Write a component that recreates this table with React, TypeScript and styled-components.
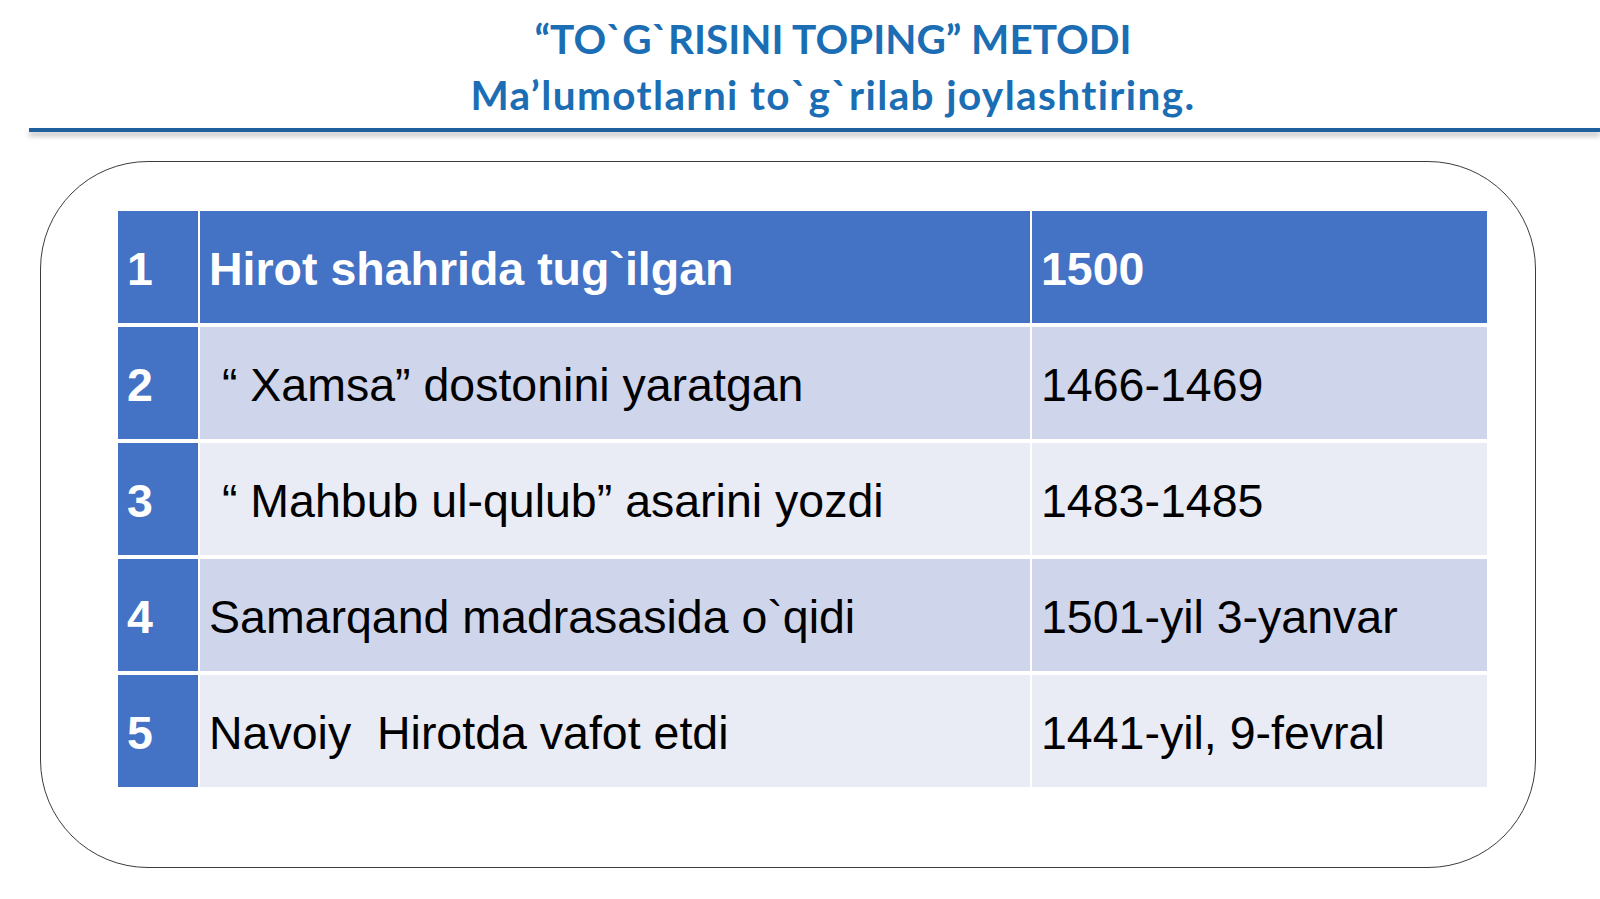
import React from "react";
import styled, { createGlobalStyle } from "styled-components";

const Global = createGlobalStyle`
  html, body { margin: 0; padding: 0; background: #ffffff; }
  body { width: 1600px; height: 899px; overflow: hidden; }
`;

const Page = styled.div`
  width: 1600px;
  height: 899px;
  display: flex;
  flex-direction: column;
  background: #ffffff;
`;

const Title = styled.h1`
  margin: 0;
  padding-top: 11px;
  display: flex;
  flex-direction: column;
  align-items: center;
  padding-left: 66px;
  font-family: Lato, "Open Sans", sans-serif;
  font-weight: 700;
  font-size: 40.5px;
  line-height: 56px;
  color: #1b6db4;
`;

const TitleLine = styled.span<{ $spacing: number }>`
  display: block;
  letter-spacing: ${(p) => p.$spacing}px;
  white-space: pre;
`;

const Rule = styled.div`
  margin-left: 29px;
  margin-top: 5px;
  height: 4px;
  background: #1f609c;
  box-shadow: 0 4px 5px rgba(120, 120, 120, 0.5);
`;

const Frame = styled.div`
  margin-left: 40px;
  margin-top: 29px;
  width: 1496px;
  height: 707px;
  box-sizing: border-box;
  border: 1.5px solid #3c3c3c;
  border-radius: 108px;
  padding: 49px 48px 0 77px;
`;

const Table = styled.div`
  display: grid;
  grid-template-columns: 80px 830px 455px;
  grid-auto-rows: 112px;
  column-gap: 2px;
  row-gap: 4px;
`;

const Cell = styled.div<{ $bg: string; $bold?: boolean; $light?: boolean }>`
  background: ${(p) => p.$bg};
  display: flex;
  align-items: center;
  padding-left: 9px;
  padding-top: 3px;
  font-family: "Liberation Sans", Arial, sans-serif;
  font-size: 46.5px;
  font-weight: ${(p) => (p.$bold ? 700 : 400)};
  color: ${(p) => (p.$light ? "#ffffff" : "#000000")};
  white-space: pre;
`;

const rows = [
  ["1", "Hirot shahrida tug`ilgan", "1500"],
  ["2", " \u201C Xamsa\u201D dostonini yaratgan", "1466-1469"],
  ["3", " \u201C Mahbub ul-qulub\u201D asarini yozdi", "1483-1485"],
  ["4", "Samarqand madrasasida o`qidi", "1501-yil 3-yanvar"],
  ["5", "Navoiy  Hirotda vafot etdi", "1441-yil, 9-fevral"],
];

const BLUE = "#4472c4";
const BAND_DARK = "#cfd5ea";
const BAND_LIGHT = "#e9ebf5";

export default function App() {
  return (
    <Page>
      <Global />
      <Title>
        <TitleLine $spacing={0}>{"\u201CTO`G`RISINI TOPING\u201D METODI"}</TitleLine>
        <TitleLine $spacing={1.4}>{"Ma\u2019lumotlarni to`g`rilab joylashtiring."}</TitleLine>
      </Title>
      <Rule />
      <Frame>
        <Table>
          {rows.map((r, i) => {
            const header = i === 0;
            const bg = header ? BLUE : i % 2 === 1 ? BAND_DARK : BAND_LIGHT;
            return (
              <React.Fragment key={r[0]}>
                <Cell $bg={BLUE} $bold $light>
                  {r[0]}
                </Cell>
                <Cell $bg={bg} $bold={header} $light={header}>
                  {r[1]}
                </Cell>
                <Cell $bg={bg} $bold={header} $light={header}>
                  {r[2]}
                </Cell>
              </React.Fragment>
            );
          })}
        </Table>
      </Frame>
    </Page>
  );
}
